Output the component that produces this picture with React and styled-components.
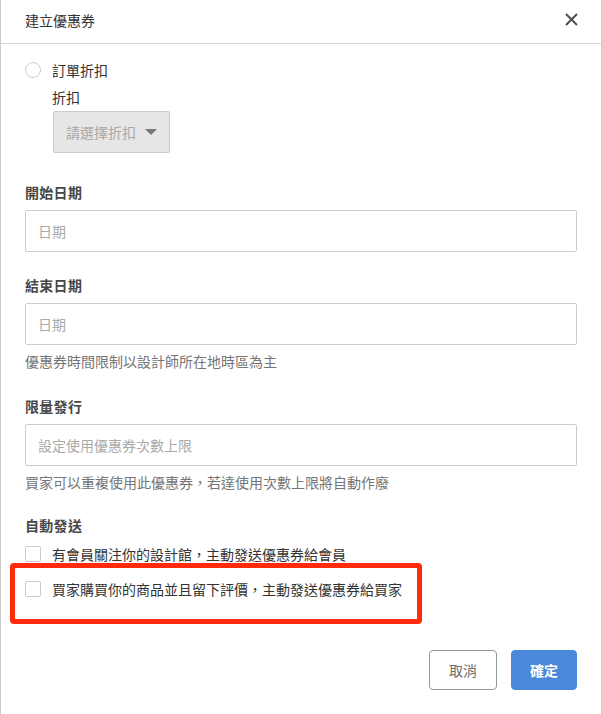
import React from 'react'
import styled, { createGlobalStyle } from 'styled-components'

const GlobalStyle = createGlobalStyle`
  html, body {
    margin: 0;
    padding: 0;
    background: #ffffff;
  }
  body {
    font-family: "Noto Sans CJK TC", "Noto Sans", sans-serif;
    font-size: 14px;
    color: #333333;
  }
  * {
    box-sizing: border-box;
  }
`

const Modal = styled.div`
  width: 602px;
  height: 714px;
  border-left: 1px solid #cccccc;
  border-right: 1px solid #cccccc;
  background: #ffffff;
  overflow: hidden;
`

const Header = styled.div`
  height: 44px;
  display: flex;
  align-items: center;
  justify-content: space-between;
  padding: 0 22px 4px 24px;
  border-bottom: 1px solid #d6d6d6;
`

const Title = styled.h1`
  margin: 0;
  font-size: 14px;
  font-weight: 400;
  line-height: 20px;
  color: #333333;
`

const CloseButton = styled.button`
  border: 0;
  background: none;
  padding: 0;
  width: 16px;
  height: 16px;
  display: flex;
  align-items: center;
  justify-content: center;
  cursor: pointer;
`

const Body = styled.div`
  padding: 16px 24px 0 24px;
`

const RadioRow = styled.label`
  display: flex;
  align-items: center;
  gap: 11px;
  line-height: 20px;
`

const Radio = styled.span`
  width: 16px;
  height: 16px;
  border-radius: 50%;
  border: 1px solid #cccccc;
  background: #ffffff;
`

const Indented = styled.div`
  padding-left: 27px;
`

const SubLabel = styled.div`
  margin-top: 7px;
  line-height: 20px;
`

const Select = styled.div`
  margin-top: 4px;
  margin-left: 1px;
  width: 117px;
  height: 42px;
  display: flex;
  align-items: center;
  justify-content: space-between;
  padding: 0 12px 0 12px;
  background: #e6e6e6;
  border: 1px solid #cccccc;
  border-radius: 2px;
  color: #a8a8a8;
`

const Caret = styled.span`
  width: 0;
  height: 0;
  border-left: 6px solid transparent;
  border-right: 6px solid transparent;
  border-top: 6px solid #777777;
`

const Section = styled.div`
  margin-top: ${p => p.$gap}px;
`

const FieldLabel = styled.div`
  font-weight: 700;
  line-height: 20px;
  letter-spacing: 0.3px;
  color: #474747;
`

const Input = styled.input`
  display: block;
  margin-top: 8px;
  width: 100%;
  height: 42px;
  padding: 0 12px;
  border: 1px solid #cccccc;
  border-radius: 2px;
  font-family: inherit;
  font-size: 14px;
  color: #333333;
  outline: none;

  &::placeholder {
    color: #aaaaaa;
  }
`

const Help = styled.div`
  margin-top: 6px;
  line-height: 20px;
  color: #757575;
`

const CheckRow = styled.label`
  position: relative;
  display: flex;
  align-items: center;
  gap: 11px;
  margin-top: ${p => p.$gap}px;
  line-height: 20px;
`

const Highlight = styled.span`
  position: absolute;
  left: -15px;
  top: -16px;
  width: 412px;
  height: 61px;
  border: 5px solid #ff2a0a;
  border-radius: 4px;
  pointer-events: none;
`

const Box = styled.span`
  width: 16px;
  height: 16px;
  flex-shrink: 0;
  border: 1px solid #cccccc;
  border-radius: 2px;
  background: #ffffff;
`

const Footer = styled.div`
  display: flex;
  justify-content: flex-end;
  gap: 14px;
  margin-top: 51px;
`

const Button = styled.button`
  height: 40px;
  padding: 0;
  width: ${p => (p.$primary ? 66 : 68)}px;
  border-radius: 4px;
  font-family: inherit;
  font-size: 14px;
  font-weight: ${p => (p.$primary ? 700 : 400)};
  border: 1px solid ${p => (p.$primary ? '#4a89d9' : '#8d9aa1')};
  background: ${p => (p.$primary ? '#4a89d9' : '#ffffff')};
  color: ${p => (p.$primary ? '#ffffff' : '#6b6b6b')};
  cursor: pointer;
`

const CloseIcon = () => (
  <svg width="13" height="13" viewBox="0 0 13 13">
    <path d="M1 1 L12 12 M12 1 L1 12" stroke="#4f4f4f" strokeWidth="2" />
  </svg>
)

const App = () => (
  <>
    <GlobalStyle />
    <Modal>
      <Header>
        <Title>建立優惠券</Title>
        <CloseButton aria-label="close">
          <CloseIcon />
        </CloseButton>
      </Header>
      <Body>
        <RadioRow>
          <Radio />
          訂單折扣
        </RadioRow>
        <Indented>
          <SubLabel>折扣</SubLabel>
          <Select>
            請選擇折扣
            <Caret />
          </Select>
        </Indented>

        <Section $gap={29}>
          <FieldLabel>開始日期</FieldLabel>
          <Input placeholder="日期" />
        </Section>

        <Section $gap={23}>
          <FieldLabel>結束日期</FieldLabel>
          <Input placeholder="日期" />
          <Help>優惠券時間限制以設計師所在地時區為主</Help>
        </Section>

        <Section $gap={25}>
          <FieldLabel>限量發行</FieldLabel>
          <Input placeholder="設定使用優惠券次數上限" />
          <Help>買家可以重複使用此優惠券，若達使用次數上限將自動作廢</Help>
        </Section>

        <Section $gap={23}>
          <FieldLabel>自動發送</FieldLabel>
          <CheckRow $gap={9}>
            <Box />
            有會員關注你的設計館，主動發送優惠券給會員
          </CheckRow>
          <CheckRow $gap={15}>
            <Box />
            買家購買你的商品並且留下評價，主動發送優惠券給買家
            <Highlight />
          </CheckRow>
        </Section>

        <Footer>
          <Button>取消</Button>
          <Button $primary>確定</Button>
        </Footer>
      </Body>
    </Modal>
  </>
)

export default App
